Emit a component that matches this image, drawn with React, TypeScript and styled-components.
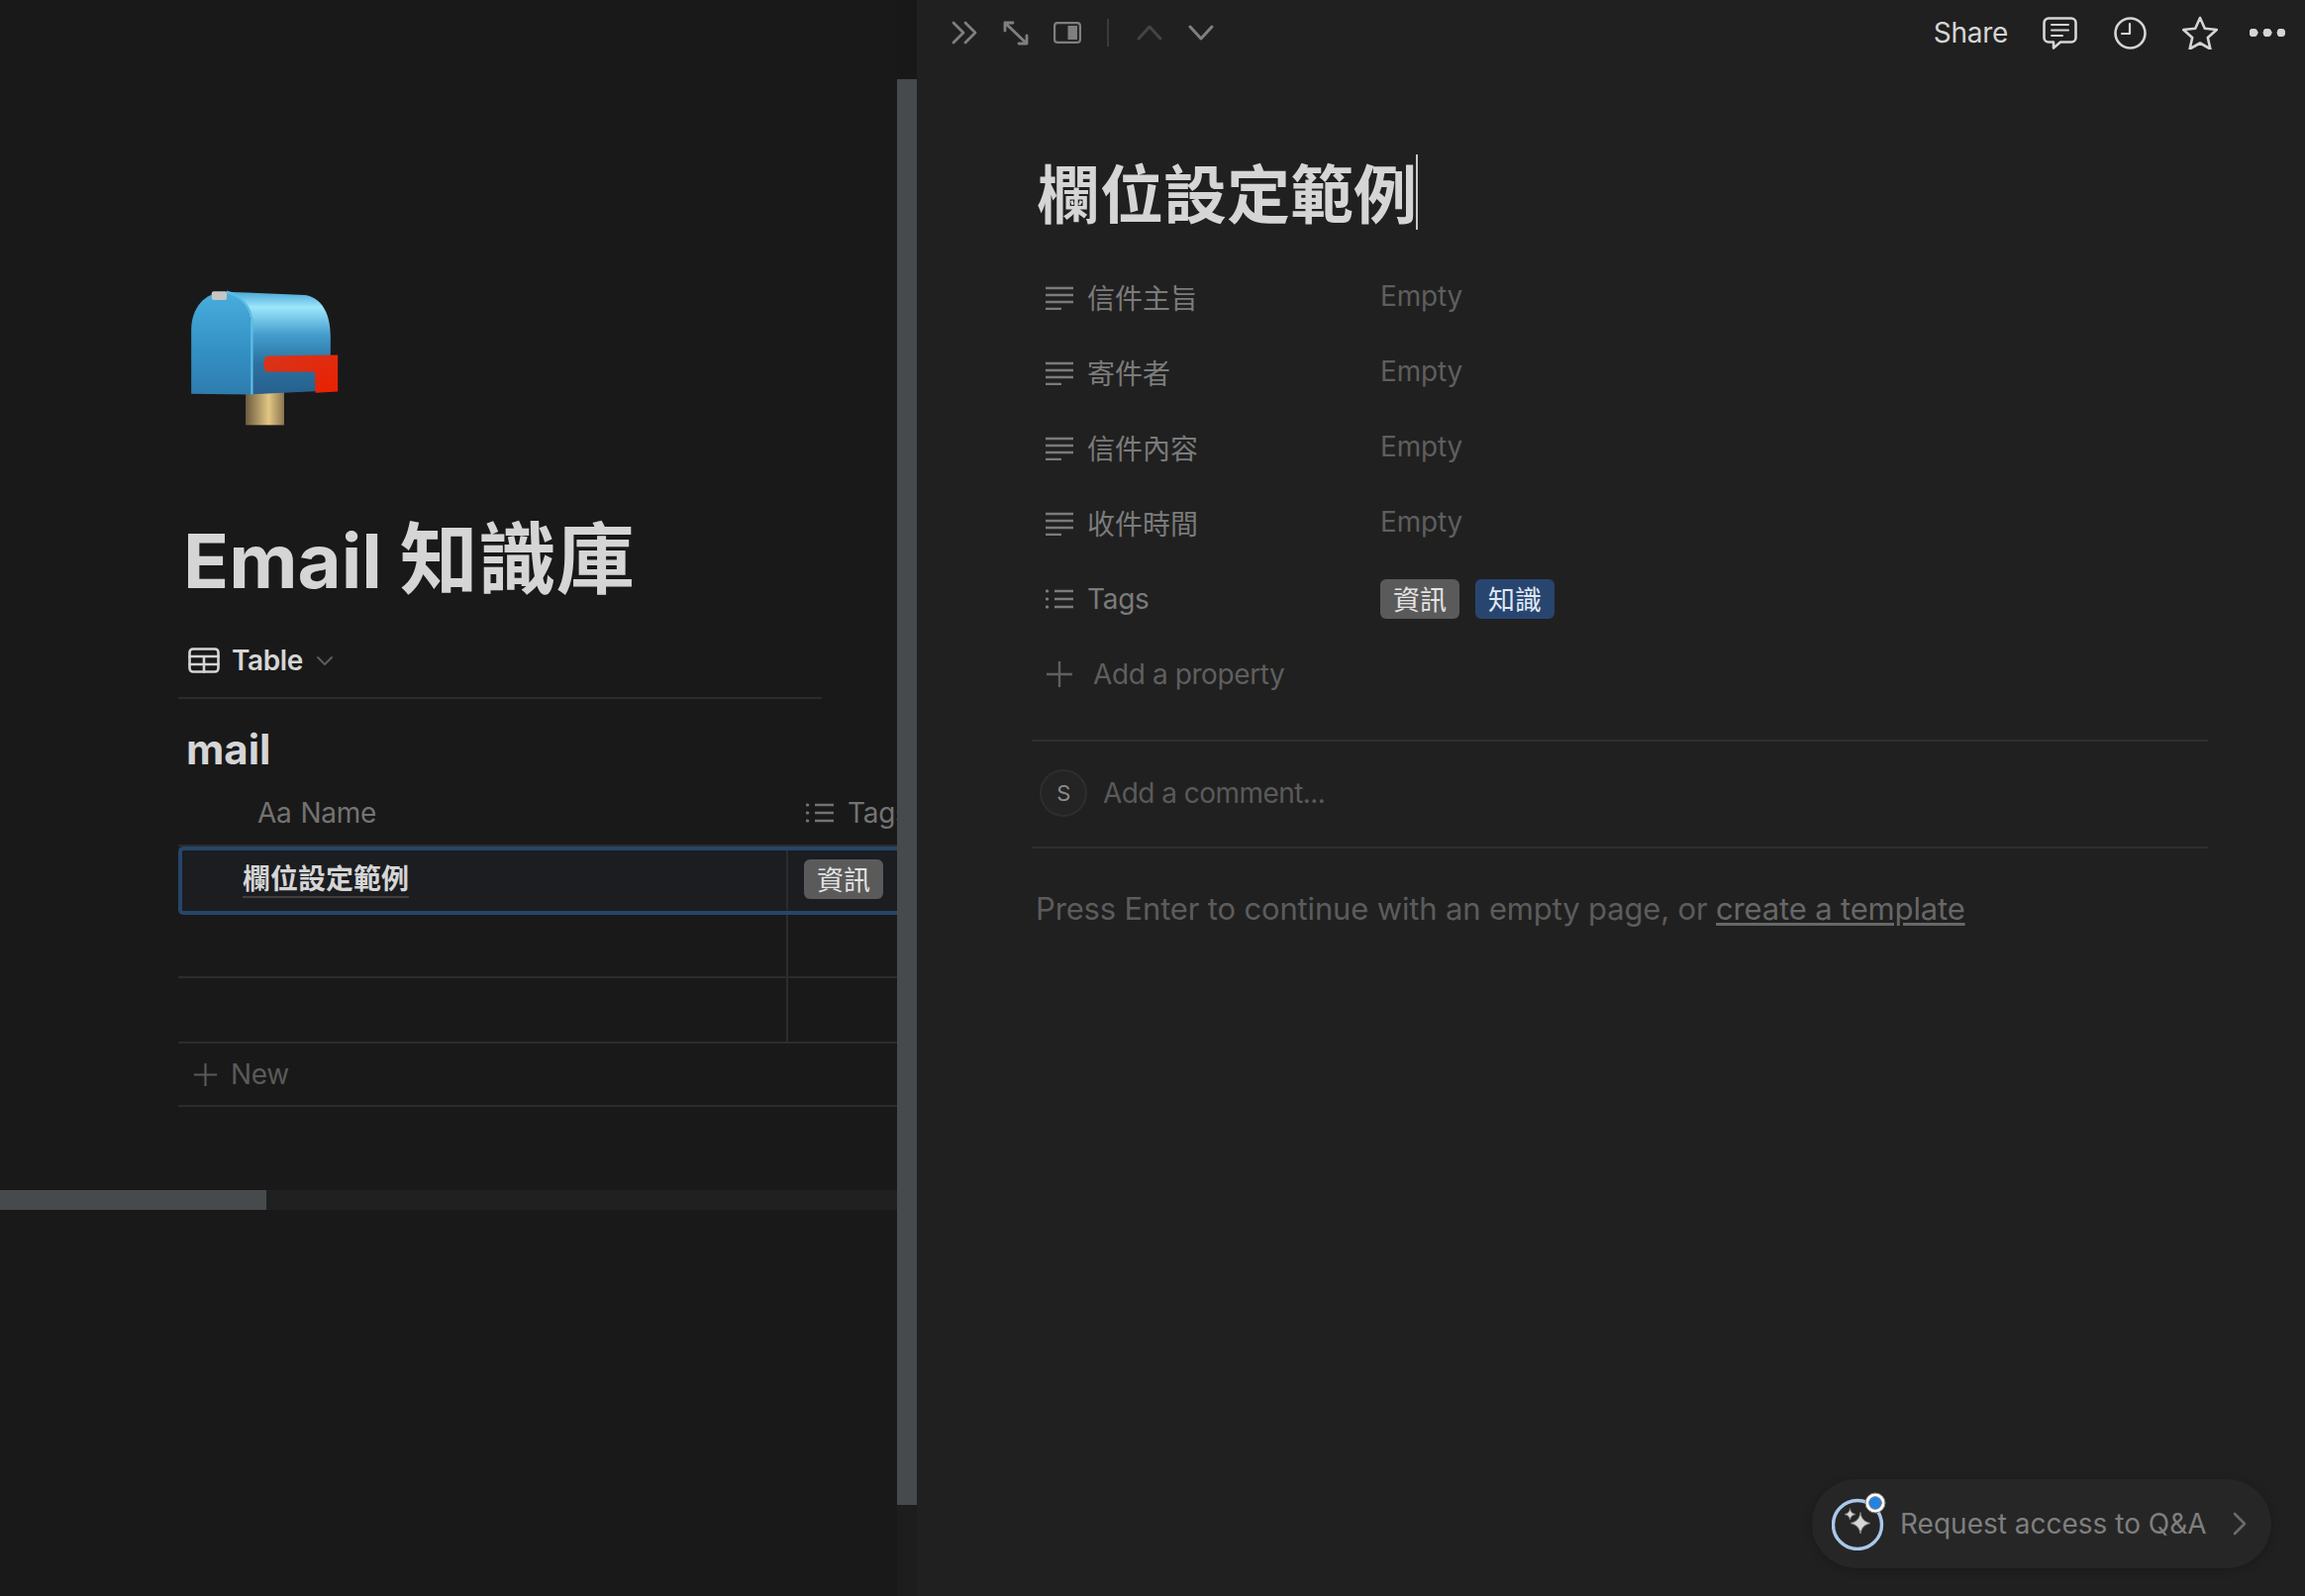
import React from "react";
import styled, { createGlobalStyle } from "styled-components";

const GlobalStyle = createGlobalStyle`
  html, body {
    margin: 0;
    background: #191919;
  }
  * {
    box-sizing: border-box;
  }
`;

const fontStack = `Inter, "Noto Sans CJK TC", sans-serif`;

const Page = styled.div`
  display: flex;
  width: 2328px;
  height: 1612px;
  overflow: hidden;
  font-family: ${fontStack};
`;

// Left: database page behind the peek panel

const DatabasePane = styled.main`
  width: 906px;
  flex-shrink: 0;
  padding-top: 293px;
  background: #191919;
  overflow: hidden;
`;

const PaneColumn = styled.div`
  padding-left: 180px;
`;

const MailboxIcon = styled.svg`
  display: block;
  width: 150px;
  height: 137px;
  margin-left: 13px;
`;

const PageTitle = styled.h1`
  margin: 90px 0 0 5px;
  font-size: 76px;
  line-height: 90px;
  font-weight: 700;
  color: #d5d5d5;
  white-space: nowrap;
`;

const PageTitleCjk = styled.span`
  font-size: 79px;
`;

const ViewBar = styled.div`
  display: flex;
  align-items: center;
  width: 650px;
  height: 63px;
  margin-top: 32px;
  padding: 0 0 13px 10px;
  border-bottom: 2px solid #2c2c2c;
  font-size: 28px;
  font-weight: 600;
  letter-spacing: -0.4px;
  color: #d5d5d5;
`;

const ViewName = styled.span`
  margin: 0 13px 0 12px;
`;

const TableName = styled.h2`
  margin: 23px 0 0 8px;
  font-size: 42px;
  line-height: 56px;
  font-weight: 700;
  color: #d5d5d5;
`;

const HeaderRow = styled.div`
  display: grid;
  grid-template-columns: 616px 1fr;
  height: 70px;
  border-bottom: 2px solid #2c2c2c;
  font-size: 28px;
  letter-spacing: -0.3px;
  color: #737373;
  white-space: nowrap;
`;

const HeaderCell = styled.div<{ $inset: number }>`
  display: flex;
  align-items: center;
  gap: 14px;
  padding-left: ${(p) => p.$inset}px;
  padding-top: 4px;
  overflow: hidden;
`;

const AaMark = styled.span`
  margin-right: -5px;
`;

const SelectedRow = styled.div`
  display: grid;
  grid-template-columns: 612px 1fr;
  height: 69px;
  border: 4px solid #264668;
  border-right: none;
  border-radius: 5px 0 0 5px;
  background: #1b1d20;
`;

const TitleCell = styled.div`
  display: flex;
  align-items: center;
  padding: 0 0 2px 61px;
  border-right: 2px solid #2c2c2c;
  font-size: 28px;
  font-weight: 600;
  color: #d5d5d5;
`;

const UnderlinedName = styled.span`
  line-height: 34px;
  border-bottom: 2px solid #3f3f3f;
`;

const TagCell = styled.div`
  display: flex;
  align-items: center;
  padding: 0 0 3px 16px;
`;

const Tag = styled.span<{ $tone: "gray" | "blue" }>`
  display: inline-flex;
  align-items: center;
  justify-content: center;
  width: 80px;
  height: 40px;
  padding-bottom: 2px;
  border-radius: 6px;
  font-size: 27px;
  color: ${(p) => (p.$tone === "blue" ? "#dfe8f3" : "#e3e3e3")};
  background: ${(p) => (p.$tone === "blue" ? "#28456f" : "#5a5a5a")};
`;

const EmptyRow = styled.div<{ $height: number }>`
  display: grid;
  grid-template-columns: 616px 1fr;
  height: ${(p) => p.$height}px;
  border-bottom: 2px solid #2c2c2c;
`;

const EmptyCell = styled.div`
  border-right: 2px solid #2c2c2c;
`;

const NewRow = styled.div`
  display: flex;
  align-items: center;
  gap: 13px;
  height: 64px;
  padding-left: 15px;
  border-bottom: 2px solid #2c2c2c;
  font-size: 28px;
  letter-spacing: -0.3px;
  color: #5a5a5a;
`;

const HorizontalTrack = styled.div`
  height: 20px;
  margin-top: 84px;
  background: #202020;
`;

const HorizontalThumb = styled.div`
  width: 269px;
  height: 100%;
  background: #464a4d;
`;

const VerticalTrack = styled.div`
  width: 20px;
  flex-shrink: 0;
  padding-top: 80px;
  background: linear-gradient(#181818 0 80px, #1d1d1d 80px);
`;

const VerticalThumb = styled.div`
  height: 1440px;
  background: #464a4d;
`;

// Right: the opened page

const PeekPane = styled.section`
  position: relative;
  flex: 1;
  background: #202020;
`;

const Toolbar = styled.header`
  display: flex;
  align-items: center;
  justify-content: space-between;
  height: 66px;
  padding: 0 20px 0 35px;
`;

const ToolGroup = styled.div`
  display: flex;
  align-items: center;
`;

const ToolDivider = styled.span`
  width: 2px;
  height: 28px;
  margin-left: 26px;
  background: #3a3a3a;
`;

const ShareLabel = styled.span`
  font-size: 28px;
  letter-spacing: -0.3px;
  color: #d5d5d5;
`;

const PeekBody = styled.div`
  width: 1188px;
  margin-left: 116px;
`;

const PeekTitle = styled.h1`
  margin: 86px 0 21px 5px;
  font-size: 64px;
  line-height: 90px;
  font-weight: 700;
  color: #d5d5d5;
  white-space: nowrap;
`;

const Caret = styled.span`
  display: inline-block;
  width: 2px;
  height: 76px;
  margin-left: -1px;
  vertical-align: -12px;
  background: #c8c8c8;
`;

const PropertyRow = styled.div`
  display: grid;
  grid-template-columns: 352px 1fr;
  align-items: center;
  height: 76px;
  font-size: 28px;
`;

const PropertyName = styled.div`
  display: flex;
  align-items: center;
  gap: 14px;
  padding-left: 14px;
  color: #7b7b7b;
`;

const PropertyLabel = styled.span<{ $cjk?: boolean }>`
  padding-bottom: ${(p) => (p.$cjk ? 2 : 0)}px;
  letter-spacing: ${(p) => (p.$cjk ? 0 : -0.3)}px;
`;

const EmptyValue = styled.span`
  padding-bottom: 4px;
  letter-spacing: -0.2px;
  color: #5e5e5e;
`;

const TagList = styled.div`
  display: flex;
  gap: 16px;
`;

const AddProperty = styled.div`
  display: flex;
  align-items: center;
  gap: 20px;
  height: 76px;
  padding-left: 14px;
  font-size: 28px;
  letter-spacing: -0.4px;
  color: #5f5f5f;
`;

const CommentRow = styled.div`
  display: flex;
  align-items: center;
  gap: 16px;
  height: 110px;
  margin-top: 28px;
  padding: 0 0 2px 8px;
  border-top: 2px solid #2f2f2f;
  border-bottom: 2px solid #2f2f2f;
  font-size: 28px;
  letter-spacing: -0.55px;
  color: #5a5a5a;
`;

const Avatar = styled.span`
  display: flex;
  align-items: center;
  justify-content: center;
  width: 48px;
  height: 48px;
  border: 2px solid #2e2e2e;
  border-radius: 50%;
  background: #242424;
  font-size: 22px;
  color: #8c8c8c;
`;

const EmptyHint = styled.p`
  margin: 39px 0 0 4px;
  font-size: 31px;
  line-height: 44px;
  letter-spacing: -0.16px;
  color: #5c5c5c;
  white-space: nowrap;
`;

const TemplateLink = styled.span`
  color: #676767;
  text-decoration: underline;
  text-decoration-thickness: 3px;
  text-underline-offset: 3px;
`;

const QaPill = styled.div`
  position: absolute;
  right: 34px;
  bottom: 28px;
  display: flex;
  align-items: center;
  width: 464px;
  height: 90px;
  padding-left: 20px;
  border-radius: 45px;
  background: #262626;
  box-shadow: 0 2px 10px rgba(0, 0, 0, 0.22);
  font-size: 28px;
  color: #7f7f7f;
`;

const QaBadgeSlot = styled.span`
  display: block;
  margin-bottom: 14px;
`;

const QaLabel = styled.span`
  margin: 0 26px 0 7px;
  white-space: nowrap;
`;

// Icons

const Glyph = styled.svg<{ $w: number; $h: number }>`
  display: block;
  flex-shrink: 0;
  width: ${(p) => p.$w}px;
  height: ${(p) => p.$h}px;
  fill: none;
  stroke: currentColor;
  stroke-linecap: round;
  stroke-linejoin: round;
`;

const ToolTint = styled.span<{ $color: string; $before?: number }>`
  display: block;
  margin-left: ${(p) => p.$before ?? 0}px;
  color: ${(p) => p.$color};
`;

const TextLinesIcon = () => (
  <Glyph $w={28} $h={24} viewBox="0 0 28 24" strokeWidth="2.4">
    <path d="M0 2h28M0 9h28M0 16h28M0 23h16" style={{ strokeLinecap: "butt" }} />
  </Glyph>
);

const ListIcon = () => (
  <Glyph $w={28} $h={20} viewBox="0 0 28 20" strokeWidth="2.4">
    <path d="M9 2h19M9 10h19M9 18h19" style={{ strokeLinecap: "butt" }} />
    <path d="M1.2 2h.6M1.2 10h.6M1.2 18h.6" strokeWidth="3" />
  </Glyph>
);

const PlusIcon = ({ size }: { size: number }) => (
  <Glyph $w={size} $h={size} viewBox="0 0 28 28" strokeWidth="2.4">
    <path d="M14 1v26M1 14h26" style={{ strokeLinecap: "butt" }} />
  </Glyph>
);

const TableIcon = () => (
  <Glyph $w={32} $h={26} viewBox="0 0 32 26" strokeWidth="2.6">
    <rect x="1.5" y="1.5" width="29" height="23" rx="3.5" />
    <path d="M1.5 9h29M1.5 17h29M16 9v15.5" />
  </Glyph>
);

const TinyChevronDown = () => (
  <Glyph $w={18} $h={11} viewBox="0 0 18 11" strokeWidth="2" style={{ color: "#5c5c5c" }}>
    <path d="M2 2l7 7 7-7" />
  </Glyph>
);

const DoubleChevronIcon = () => (
  <Glyph $w={26} $h={24} viewBox="0 0 26 24" strokeWidth="2.8">
    <path d="M2 2l10 10L2 22M14 2l10 10-10 10" />
  </Glyph>
);

const ExpandIcon = () => (
  <Glyph $w={28} $h={27} viewBox="0 0 28 27" strokeWidth="2.8">
    <path d="M3 3l22 21M3 11V3h8M25 16v8h-8" />
  </Glyph>
);

const SidePanelIcon = () => (
  <Glyph $w={28} $h={22} viewBox="0 0 28 22" strokeWidth="2.2">
    <rect x="1.1" y="1.1" width="25.8" height="19.800" rx="3" />
    <rect x="14.5" y="4" width="9.5" height="14" fill="currentColor" stroke="none" />
  </Glyph>
);

const ChevronIcon = ({ up }: { up?: boolean }) => (
  <Glyph $w={26} $h={16} viewBox="0 0 26 16" strokeWidth="3">
    <path d={up ? "M2 14L13 2l11 12" : "M2 2l11 12L24 2"} />
  </Glyph>
);

const CommentIcon = () => (
  <Glyph $w={35} $h={33} viewBox="0 0 35 33" strokeWidth="2.6">
    <path d="M6 1.500h23a4.500 4.500 0 0 1 4.500 4.500v15a4.500 4.500 0 0 1-4.500 4.500H18l-7 6v-6H6A4.500 4.500 0 0 1 1.500 21V6A4.500 4.500 0 0 1 6 1.500z" />
    <path d="M9 8h17M9 13.500h17M9 19h11" strokeWidth="2" />
  </Glyph>
);

const ClockIcon = () => (
  <Glyph $w={33} $h={33} viewBox="0 0 33 33" strokeWidth="2.6">
    <circle cx="16.500" cy="16.500" r="15" />
    <path d="M16 7v10H8" strokeWidth="2.2" />
  </Glyph>
);

const StarIcon = () => (
  <Glyph $w={36} $h={34} viewBox="0 0 36 34" strokeWidth="2.6">
    <path d="M18 2l4.800 10.800 12 1.200-9 8 2.600 11.500L18 27.500 7.600 33.500 10.200 22l-9-8 12-1.200z" />
  </Glyph>
);

const DotsIcon = () => (
  <Glyph $w={36} $h={8} viewBox="0 0 36 8" stroke="none">
    <circle cx="4" cy="4" r="4" fill="currentColor" />
    <circle cx="18" cy="4" r="4" fill="currentColor" />
    <circle cx="32" cy="4" r="4" fill="currentColor" />
  </Glyph>
);

const SparkleBadge = () => (
  <Glyph $w={62} $h={68} viewBox="0 0 62 68" stroke="none">
    <circle cx="26" cy="42" r="24.500" stroke="#a9c8ea" strokeWidth="3.4" />
    <path
      d="M29 30c1.200 6 3.600 8.800 10 10.500-6.400 1.700-8.800 4.500-10 10.500-1.200-6-3.600-8.800-10-10.500 6.400-1.700 8.800-4.500 10-10.500z"
      fill="#d8d8d8"
    />
    <path
      d="M18.500 26c.6 3.200 1.800 4.500 5.500 5.500-3.700 1-4.900 2.300-5.500 5.500-.6-3.200-1.800-4.500-5.500-5.500 3.700-1 4.900-2.300 5.500-5.500z"
      fill="#d8d8d8"
    />
    <circle cx="44" cy="20" r="10" fill="#fff" />
    <circle cx="44" cy="20" r="6.300" fill="#2383e2" />
  </Glyph>
);

const SmallChevronRight = () => (
  <Glyph $w={14} $h={24} viewBox="0 0 14 24" strokeWidth="2.600" style={{ color: "#6a6a6a" }}>
    <path d="M2 2l10 10L2 22" />
  </Glyph>
);

const Mailbox = () => (
  <MailboxIcon viewBox="70 70 450 412">
    <defs>
      <linearGradient id="postFill" x1="0" x2="1" y1="0" y2="0">
        <stop offset="0" stopColor="#6b5a3e" />
        <stop offset="0.6" stopColor="#e2c684" />
        <stop offset="1" stopColor="#8b7650" />
      </linearGradient>
      <linearGradient id="boxTop" x1="0" x2="0" y1="0" y2="1">
        <stop offset="0" stopColor="#4aa6d6" />
        <stop offset="0.15" stopColor="#9de6fb" />
        <stop offset="0.42" stopColor="#439dcd" />
        <stop offset="0.7" stopColor="#2b719f" />
        <stop offset="1" stopColor="#27608d" />
      </linearGradient>
      <linearGradient id="boxFront" x1="0" x2="0" y1="0" y2="1">
        <stop offset="0" stopColor="#48aedc" />
        <stop offset="0.6" stopColor="#338fc3" />
        <stop offset="1" stopColor="#2f7daf" />
      </linearGradient>
      <linearGradient id="flagFill" x1="0" x2="1" y1="0" y2="1">
        <stop offset="0" stopColor="#d8351c" />
        <stop offset="1" stopColor="#ea2000" />
      </linearGradient>
    </defs>
    <rect x="235" y="380" width="117" height="100" fill="url(#postFill)" />
    <path
      d="M175 75L415 85C465 92 493 140 493 210V375L250 387V170C250 120 215 85 175 75Z"
      fill="url(#boxTop)"
    />
    <path
      d="M70 385V190C70 125 110 75 175 75C215 85 250 120 250 170V387Z"
      fill="url(#boxFront)"
    />
    <path d="M177 75C220 86 254 122 254 170V387" fill="none" stroke="#5bbde6" strokeWidth="7" />
    <rect x="132" y="74" width="46" height="26" rx="6" fill="#c6c6c6" />
    <path
      d="M305 270L515 267V378L447 382L445 318H305C295 318 290 310 290 296C290 280 295 270 305 270Z"
      fill="url(#flagFill)"
    />
  </MailboxIcon>
);

const propertyNames = ["信件主旨", "寄件者", "信件內容", "收件時間"];

const App = () => {
  return (
    <Page>
      <GlobalStyle />
      <DatabasePane>
        <PaneColumn>
          <Mailbox />
          <PageTitle>
            Email <PageTitleCjk>知識庫</PageTitleCjk>
          </PageTitle>
          <ViewBar>
            <TableIcon />
            <ViewName>Table</ViewName>
            <TinyChevronDown />
          </ViewBar>
          <TableName>mail</TableName>
          <HeaderRow>
            <HeaderCell $inset={80}>
              <AaMark>Aa</AaMark>
              <span>Name</span>
            </HeaderCell>
            <HeaderCell $inset={18}>
              <ListIcon />
              <span>Tags</span>
            </HeaderCell>
          </HeaderRow>
          <SelectedRow>
            <TitleCell>
              <UnderlinedName>欄位設定範例</UnderlinedName>
            </TitleCell>
            <TagCell>
              <Tag $tone="gray">資訊</Tag>
            </TagCell>
          </SelectedRow>
          <EmptyRow $height={64}>
            <EmptyCell />
          </EmptyRow>
          <EmptyRow $height={66}>
            <EmptyCell />
          </EmptyRow>
          <NewRow>
            <PlusIcon size={25} />
            <span>New</span>
          </NewRow>
        </PaneColumn>
        <HorizontalTrack>
          <HorizontalThumb />
        </HorizontalTrack>
      </DatabasePane>
      <VerticalTrack>
        <VerticalThumb />
      </VerticalTrack>

      <PeekPane>
        <Toolbar>
          <ToolGroup>
            <ToolTint $color="#7f7f7f">
              <DoubleChevronIcon />
            </ToolTint>
            <ToolTint $color="#7f7f7f" $before={25}>
              <ExpandIcon />
            </ToolTint>
            <ToolTint $color="#7f7f7f" $before={24}>
              <SidePanelIcon />
            </ToolTint>
            <ToolDivider />
            <ToolTint $color="#444444" $before={28}>
              <ChevronIcon up />
            </ToolTint>
            <ToolTint $color="#7f7f7f" $before={26}>
              <ChevronIcon />
            </ToolTint>
          </ToolGroup>
          <ToolGroup>
            <ShareLabel>Share</ShareLabel>
            <ToolTint $color="#d5d5d5" $before={35}>
              <CommentIcon />
            </ToolTint>
            <ToolTint $color="#d5d5d5" $before={37}>
              <ClockIcon />
            </ToolTint>
            <ToolTint $color="#d5d5d5" $before={36}>
              <StarIcon />
            </ToolTint>
            <ToolTint $color="#d5d5d5" $before={32}>
              <DotsIcon />
            </ToolTint>
          </ToolGroup>
        </Toolbar>

        <PeekBody>
          <PeekTitle>
            欄位設定範例
            <Caret />
          </PeekTitle>
          {propertyNames.map((name) => (
            <PropertyRow key={name}>
              <PropertyName>
                <TextLinesIcon />
                <PropertyLabel $cjk>{name}</PropertyLabel>
              </PropertyName>
              <EmptyValue>Empty</EmptyValue>
            </PropertyRow>
          ))}
          <PropertyRow>
            <PropertyName>
              <ListIcon />
              <PropertyLabel>Tags</PropertyLabel>
            </PropertyName>
            <TagList>
              <Tag $tone="gray">資訊</Tag>
              <Tag $tone="blue">知識</Tag>
            </TagList>
          </PropertyRow>
          <AddProperty>
            <PlusIcon size={28} />
            <span>Add a property</span>
          </AddProperty>
          <CommentRow>
            <Avatar>S</Avatar>
            <span>Add a comment...</span>
          </CommentRow>
          <EmptyHint>
            Press Enter to continue with an empty page, or <TemplateLink>create a template</TemplateLink>
          </EmptyHint>
        </PeekBody>

        <QaPill>
          <QaBadgeSlot>
            <SparkleBadge />
          </QaBadgeSlot>
          <QaLabel>Request access to Q&amp;A</QaLabel>
          <SmallChevronRight />
        </QaPill>
      </PeekPane>
    </Page>
  );
};

export default App;
